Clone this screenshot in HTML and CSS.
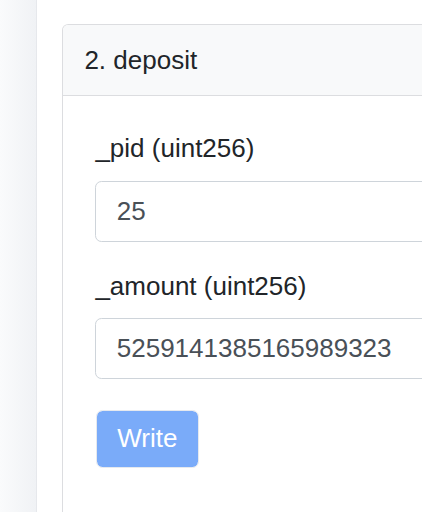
FILE: index.html
```html
<!DOCTYPE html>
<html lang="en">
<head>
<meta charset="utf-8">
<title>deposit</title>
<link rel="stylesheet" href="styles.css">
</head>
<body>
<div class="page">
  <aside class="sidebar"></aside>
  <main class="main">
    <section class="card">
      <div class="card-header">2. deposit</div>
      <div class="card-body">
        <div class="field">
          <label class="field-label" for="pid">_pid (uint256)</label>
          <input class="field-input" id="pid" type="text" value="25">
        </div>
        <div class="field">
          <label class="field-label" for="amount">_amount (uint256)</label>
          <input class="field-input" id="amount" type="text" value="5259141385165989323">
        </div>
        <div class="actions">
          <button class="btn-write" type="button">Write</button>
        </div>
      </div>
    </section>
  </main>
</div>
</body>
</html>
```
FILE: styles.css
```css
html, body {
  margin: 0;
  padding: 0;
  height: 100%;
  overflow: hidden;
  background: #ffffff;
  font-family: "Liberation Sans", Arial, Helvetica, sans-serif;
}

.page {
  display: flex;
  height: 100vh;
}

.sidebar {
  flex: none;
  width: 36px;
  background: linear-gradient(to right, #fafbfc, #f0f2f5);
  border-right: 1px solid #e6e8ec;
}

.main {
  flex: none;
  padding: 24px 0 0 25px;
}

.card {
  width: 600px;
  min-height: 600px;
  box-sizing: border-box;
  border: 1.6px solid #dcdde0;
  border-bottom: none;
  border-radius: 6.4px 6.4px 0 0;
  background: #ffffff;
}

.card-header {
  background: #f8f9fa;
  padding: 15.6px 21.4px 15.8px;
  border-bottom: 1.6px solid #dcdde0;
  border-radius: 5px 5px 0 0;
  font-size: 26px;
  line-height: 38.4px;
  color: #212529;
}

.card-body {
  padding: 33.6px 32px 32px 32.4px;
}

.field {
  margin-bottom: 25.6px;
}

.field-label {
  display: block;
  margin-bottom: 12.8px;
  font-size: 26px;
  line-height: 38.4px;
  color: #212529;
}

.field-input {
  display: block;
  width: 100%;
  height: 61px;
  box-sizing: border-box;
  border: 1.6px solid #ced4da;
  border-radius: 6.4px;
  padding: 0 20.4px;
  font-family: "Liberation Sans", Arial, Helvetica, sans-serif;
  font-size: 26px;
  line-height: 38.4px;
  color: #495057;
  background: #ffffff;
  outline: none;
}

.actions {
  padding-top: 4.6px;
}

.btn-write {
  width: 103px;
  height: 58px;
  box-sizing: border-box;
  margin-left: 0.5px;
  border: 1px solid #e6e9ee;
  border-radius: 6.4px;
  background: #7aabf9;
  background-clip: padding-box;
  color: #ffffff;
  font-family: "Liberation Sans", Arial, Helvetica, sans-serif;
  font-size: 26px;
  line-height: 38.4px;
  padding: 0;
  cursor: default;
}
```
